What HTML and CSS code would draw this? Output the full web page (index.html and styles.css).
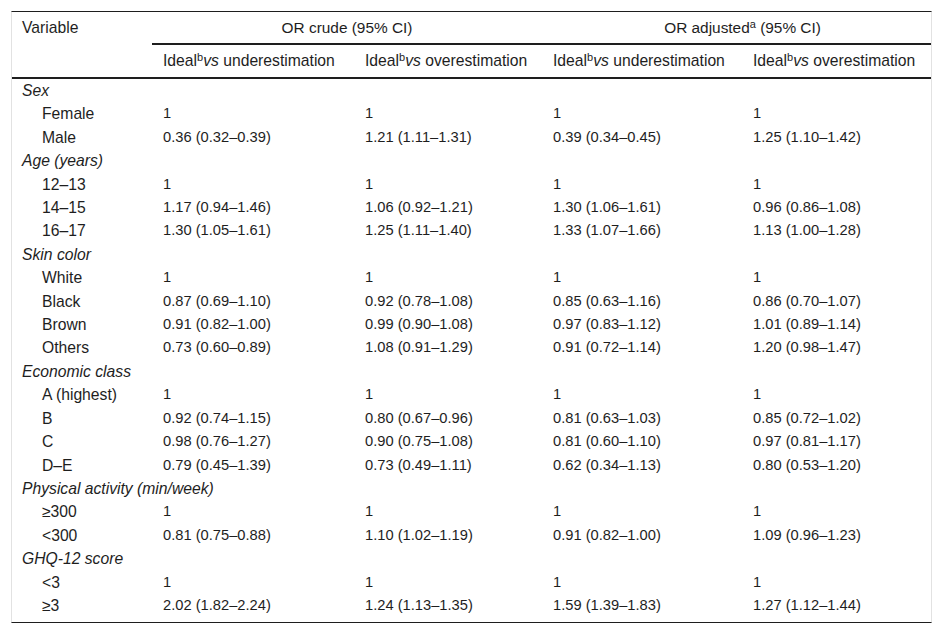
FILE: index.html
```html
<!DOCTYPE html>
<html>
<head>
<meta charset="utf-8">
<link rel="stylesheet" href="styles.css">
</head>
<body>
<div class="wrap">
<table class="or-table">
  <colgroup>
    <col class="c-var"><col class="c-a"><col class="c-b"><col class="c-c"><col class="c-d">
  </colgroup>
  <thead>
    <tr class="h1">
      <th class="var" rowspan="2">Variable</th>
      <th class="grp grp-crude" colspan="2">OR crude (95% CI)</th>
      <th class="grp grp-adj" colspan="2">OR adjusted<sup>a</sup> (95% CI)</th>
    </tr>
    <tr class="h2">
      <th>Ideal<sup>b</sup><i>vs</i> underestimation</th>
      <th>Ideal<sup>b</sup><i>vs</i> overestimation</th>
      <th>Ideal<sup>b</sup><i>vs</i> underestimation</th>
      <th>Ideal<sup>b</sup><i>vs</i> overestimation</th>
    </tr>
  </thead>
  <tbody>
    <tr class="cat"><td>Sex</td><td></td><td></td><td></td><td></td></tr>
    <tr><td class="sub">Female</td><td>1</td><td>1</td><td>1</td><td>1</td></tr>
    <tr><td class="sub">Male</td><td>0.36 (0.32–0.39)</td><td>1.21 (1.11–1.31)</td><td>0.39 (0.34–0.45)</td><td>1.25 (1.10–1.42)</td></tr>
    <tr class="cat"><td>Age (years)</td><td></td><td></td><td></td><td></td></tr>
    <tr><td class="sub">12–13</td><td>1</td><td>1</td><td>1</td><td>1</td></tr>
    <tr><td class="sub">14–15</td><td>1.17 (0.94–1.46)</td><td>1.06 (0.92–1.21)</td><td>1.30 (1.06–1.61)</td><td>0.96 (0.86–1.08)</td></tr>
    <tr><td class="sub">16–17</td><td>1.30 (1.05–1.61)</td><td>1.25 (1.11–1.40)</td><td>1.33 (1.07–1.66)</td><td>1.13 (1.00–1.28)</td></tr>
    <tr class="cat"><td>Skin color</td><td></td><td></td><td></td><td></td></tr>
    <tr><td class="sub">White</td><td>1</td><td>1</td><td>1</td><td>1</td></tr>
    <tr><td class="sub">Black</td><td>0.87 (0.69–1.10)</td><td>0.92 (0.78–1.08)</td><td>0.85 (0.63–1.16)</td><td>0.86 (0.70–1.07)</td></tr>
    <tr><td class="sub">Brown</td><td>0.91 (0.82–1.00)</td><td>0.99 (0.90–1.08)</td><td>0.97 (0.83–1.12)</td><td>1.01 (0.89–1.14)</td></tr>
    <tr><td class="sub">Others</td><td>0.73 (0.60–0.89)</td><td>1.08 (0.91–1.29)</td><td>0.91 (0.72–1.14)</td><td>1.20 (0.98–1.47)</td></tr>
    <tr class="cat"><td>Economic class</td><td></td><td></td><td></td><td></td></tr>
    <tr><td class="sub">A (highest)</td><td>1</td><td>1</td><td>1</td><td>1</td></tr>
    <tr><td class="sub">B</td><td>0.92 (0.74–1.15)</td><td>0.80 (0.67–0.96)</td><td>0.81 (0.63–1.03)</td><td>0.85 (0.72–1.02)</td></tr>
    <tr><td class="sub">C</td><td>0.98 (0.76–1.27)</td><td>0.90 (0.75–1.08)</td><td>0.81 (0.60–1.10)</td><td>0.97 (0.81–1.17)</td></tr>
    <tr><td class="sub">D–E</td><td>0.79 (0.45–1.39)</td><td>0.73 (0.49–1.11)</td><td>0.62 (0.34–1.13)</td><td>0.80 (0.53–1.20)</td></tr>
    <tr class="cat"><td>Physical activity (min/week)</td><td></td><td></td><td></td><td></td></tr>
    <tr><td class="sub">≥300</td><td>1</td><td>1</td><td>1</td><td>1</td></tr>
    <tr><td class="sub">&lt;300</td><td>0.81 (0.75–0.88)</td><td>1.10 (1.02–1.19)</td><td>0.91 (0.82–1.00)</td><td>1.09 (0.96–1.23)</td></tr>
    <tr class="cat"><td>GHQ-12 score</td><td></td><td></td><td></td><td></td></tr>
    <tr><td class="sub">&lt;3</td><td>1</td><td>1</td><td>1</td><td>1</td></tr>
    <tr class="last"><td class="sub">≥3</td><td>2.02 (1.82–2.24)</td><td>1.24 (1.13–1.35)</td><td>1.59 (1.39–1.83)</td><td>1.27 (1.12–1.44)</td></tr>
  </tbody>
</table>
</div>
</body>
</html>
```
FILE: styles.css
```css
html, body {
  margin: 0;
  padding: 0;
  background: #fff;
}
.wrap {
  padding: 11px 0 0 11px;
}
.or-table {
  border-collapse: separate;
  border-spacing: 0;
  table-layout: fixed;
  width: 921px;
  border-top: 1px solid #1e1e1e;
  border-bottom: 1px solid #1e1e1e;
  border-left: 1px solid #e2e2e2;
  border-right: 1px solid #e2e2e2;
  font-family: "Liberation Sans", Arial, sans-serif;
  font-size: 14.7px;
  line-height: 19.4px;
  color: #1e1e1e;
}
.c-var { width: 140px; }
.c-a { width: 202px; }
.c-b { width: 188px; }
.c-c { width: 200px; }
.c-d { width: 189px; }

th {
  font-weight: normal;
  font-size: 15.7px;
  text-align: left;
  white-space: nowrap;
  padding: 6px 0 6px 11px;
  vertical-align: top;
}
.h1 th {
  padding-top: 6px;
  padding-bottom: 5.6px;
}
.h1 th.grp {
  text-align: center;
  border-bottom: 2px solid #1e1e1e;
  padding-right: 11px;
  font-size: 15.4px;
}
.h1 th.grp-adj {
  padding-left: 23px;
}
.h1 th.var {
  padding-left: 10px;
  border-bottom: 2px solid #1e1e1e;
}
.h2 th {
  padding-top: 6.3px;
  padding-bottom: 6.3px;
  border-bottom: 2px solid #1e1e1e;
}
sup {
  font-size: 11px;
  line-height: 0;
  vertical-align: 5px;
}
td {
  padding: 2px 0 2px 11px;
  white-space: nowrap;
}
td:first-child {
  padding-left: 10px;
  font-size: 15.7px;
}
.cat td:first-child {
  font-style: italic;
}
td.sub {
  padding-left: 30px;
}
.last td {
  padding-bottom: 6.6px;
}
```
